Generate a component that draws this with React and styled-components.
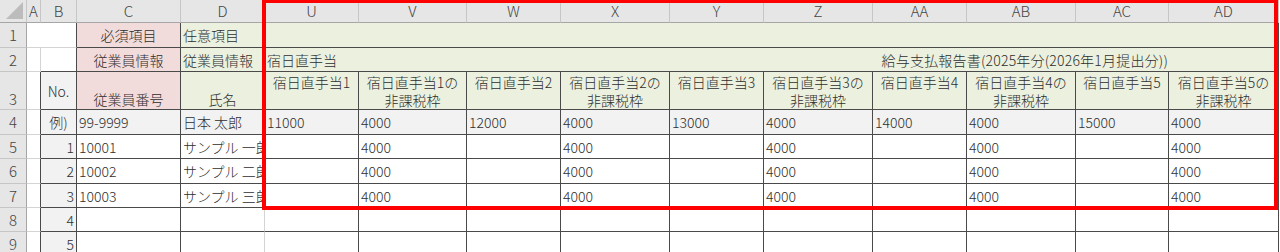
import React from "react";
import styled, { createGlobalStyle, css } from "styled-components";

const corLinha = "#4a4a4a";
const corGrade = "#d4d4d4";
const corCabecalho = "#e6e6e6";
const corRosa = "#f2dcdb";
const corVerde = "#ebf1de";
const corCinza = "#f2f2f2";

const GlobalStyle = createGlobalStyle`
  html, body {
    margin: 0;
    padding: 0;
    background: #ffffff;
    overflow: hidden;
  }
  body {
    font-family: "Noto Sans CJK JP", "Noto Sans", sans-serif;
    font-weight: 300;
    color: #2e2e2e;
  }
`;

const Planilha = styled.div`
  position: relative;
  width: 1280px;
  height: 252px;
  overflow: hidden;
`;

const Grade = styled.div`
  display: grid;
  grid-template-columns: 27px 14px 36px 104px 84px 94px 108px 94px 109px 94px 109px 94px 109px 93px 110px;
  grid-template-rows: 23px 25px 24px 38px 25px 24px 25px 24px 24px 24px;
`;

const linha = (valor) => {
  if (valor === "dark") return corLinha;
  if (valor === "none") return "transparent";
  return corGrade;
};

const Celula = styled.div`
  box-sizing: border-box;
  display: flex;
  min-width: 0;
  overflow: hidden;
  white-space: nowrap;
  font-size: 14px;
  line-height: 18px;
  padding: 0 2px;
  background: ${(p) => p.$bg || "#ffffff"};
  border-right: 1px solid ${(p) => linha(p.$r)};
  border-bottom: 1px solid ${(p) => linha(p.$b)};
  justify-content: ${(p) =>
    p.$align === "center" ? "center" : p.$align === "right" ? "flex-end" : "flex-start"};
  align-items: ${(p) =>
    p.$v === "top" ? "flex-start" : p.$v === "bottom" ? "flex-end" : "center"};
  ${(p) =>
    p.$span &&
    css`
      grid-column: span ${p.$span};
    `}
`;

const LetraColuna = styled(Celula)`
  background: ${corCabecalho};
  color: #444444;
  font-size: 15px;
  justify-content: center;
  border-right: 1px solid #c6c6c6;
  border-bottom: 1px solid #a6a6a6;
`;

const Canto = styled(LetraColuna)`
  position: relative;
  &::after {
    content: "";
    position: absolute;
    right: 3px;
    bottom: 3px;
    border-left: 17px solid transparent;
    border-bottom: 17px solid #bcbcbc;
  }
`;

const NumeroLinha = styled(Celula)`
  background: ${corCabecalho};
  color: #444444;
  font-size: 15px;
  justify-content: center;
  border-right: 1px solid #a6a6a6;
  border-bottom: 1px solid #c6c6c6;
`;

const TituloItem = styled.span`
  white-space: pre-line;
  text-align: center;
  padding-top: 1px;
`;

const TextoInferior = styled.span`
  padding-bottom: 1px;
`;

const FaixaTitulo = styled(Celula)`
  justify-content: space-between;
  padding-right: 110px;
`;

const TextoLongo = styled.span`
  letter-spacing: 0.2px;
`;

const Destaque = styled.div`
  position: absolute;
  left: 262px;
  top: -1px;
  width: 1016px;
  height: 211px;
  box-sizing: border-box;
  border: 4px solid #ff0000;
  pointer-events: none;
`;

const colunas = ["U", "V", "W", "X", "Y", "Z", "AA", "AB", "AC", "AD"];

const titulos = [
  "宿日直手当1",
  "宿日直手当1の\n非課税枠",
  "宿日直手当2",
  "宿日直手当2の\n非課税枠",
  "宿日直手当3",
  "宿日直手当3の\n非課税枠",
  "宿日直手当4",
  "宿日直手当4の\n非課税枠",
  "宿日直手当5",
  "宿日直手当5の\n非課税枠",
];

const exemplo = ["11000", "4000", "12000", "4000", "13000", "4000", "14000", "4000", "15000", "4000"];

const funcionarios = [
  { no: 1, codigo: "10001", nome: "サンプル 一郎" },
  { no: 2, codigo: "10002", nome: "サンプル 二郎" },
  { no: 3, codigo: "10003", nome: "サンプル 三郎" },
];

function App() {
  return (
    <Planilha>
      <GlobalStyle />
      <Grade>
        {/* cabecalho de colunas */}
        <Canto />
        <LetraColuna>A</LetraColuna>
        <LetraColuna>B</LetraColuna>
        <LetraColuna>C</LetraColuna>
        <LetraColuna>D</LetraColuna>
        {colunas.map((c) => (
          <LetraColuna key={c}>{c}</LetraColuna>
        ))}

        {/* linha 1 */}
        <NumeroLinha>1</NumeroLinha>
        <Celula $span={2} $r="dark" $b="light" />
        <Celula $bg={corRosa} $align="center" $r="dark" $b="dark">必須項目</Celula>
        <Celula $bg={corVerde} $r="dark" $b="dark">任意項目</Celula>
        <Celula $bg={corVerde} $span={10} $r="dark" $b="dark" />

        {/* linha 2 */}
        <NumeroLinha>2</NumeroLinha>
        <Celula $r="light" $b="light" />
        <Celula $r="dark" $b="dark" />
        <Celula $bg={corRosa} $align="center" $r="dark" $b="dark">従業員情報</Celula>
        <Celula $bg={corVerde} $r="dark" $b="dark">従業員情報</Celula>
        <FaixaTitulo $bg={corVerde} $span={10} $r="dark" $b="dark">
          <span>宿日直手当</span>
          <TextoLongo>給与支払報告書(2025年分(2026年1月提出分))</TextoLongo>
        </FaixaTitulo>

        {/* linha 3 */}
        <NumeroLinha $v="bottom">
          <TextoInferior>3</TextoInferior>
        </NumeroLinha>
        <Celula $r="dark" $b="light" />
        <Celula $bg={corCinza} $align="center" $r="dark" $b="dark">No.</Celula>
        <Celula $bg={corRosa} $align="center" $v="bottom" $r="dark" $b="dark">
          <TextoInferior>従業員番号</TextoInferior>
        </Celula>
        <Celula $bg={corVerde} $align="center" $v="bottom" $r="dark" $b="dark">
          <TextoInferior>氏名</TextoInferior>
        </Celula>
        {titulos.map((t) => (
          <Celula key={t} $bg={corVerde} $align="center" $v="top" $r="dark" $b="dark">
            <TituloItem>{t}</TituloItem>
          </Celula>
        ))}

        {/* linha 4: exemplo */}
        <NumeroLinha>4</NumeroLinha>
        <Celula $r="dark" $b="light" />
        <Celula $bg={corCinza} $align="center" $r="dark" $b="dark">例)</Celula>
        <Celula $bg={corCinza} $r="dark" $b="dark">99-9999</Celula>
        <Celula $bg={corCinza} $r="dark" $b="dark">日本 太郎</Celula>
        {exemplo.map((v, i) => (
          <Celula key={i} $bg={corCinza} $r="dark" $b="dark">{v}</Celula>
        ))}

        {/* linhas 5 a 7 */}
        {funcionarios.map((f, idx) => (
          <React.Fragment key={f.codigo}>
            <NumeroLinha>{idx + 5}</NumeroLinha>
            <Celula $r="dark" $b="light" />
            <Celula $bg={corCinza} $align="right" $r="dark" $b="dark">{f.no}</Celula>
            <Celula $r="dark" $b="dark">{f.codigo}</Celula>
            <Celula $r="dark" $b="dark">{f.nome}</Celula>
            {colunas.map((c, i) => (
              <Celula key={c} $r="dark" $b="dark">{i % 2 === 1 ? "4000" : ""}</Celula>
            ))}
          </React.Fragment>
        ))}

        {/* linhas 8 e 9 */}
        {[4, 5].map((n) => (
          <React.Fragment key={n}>
            <NumeroLinha>{n + 4}</NumeroLinha>
            <Celula $r="dark" $b="light" />
            <Celula $bg={corCinza} $align="right" $r="dark" $b="dark">{n}</Celula>
            <Celula $r="dark" $b="dark" />
            <Celula $r="light" $b="dark" />
            {colunas.map((c) => (
              <Celula key={c} $r="dark" $b="dark" />
            ))}
          </React.Fragment>
        ))}
      </Grade>
      <Destaque />
    </Planilha>
  );
}

export default App;
